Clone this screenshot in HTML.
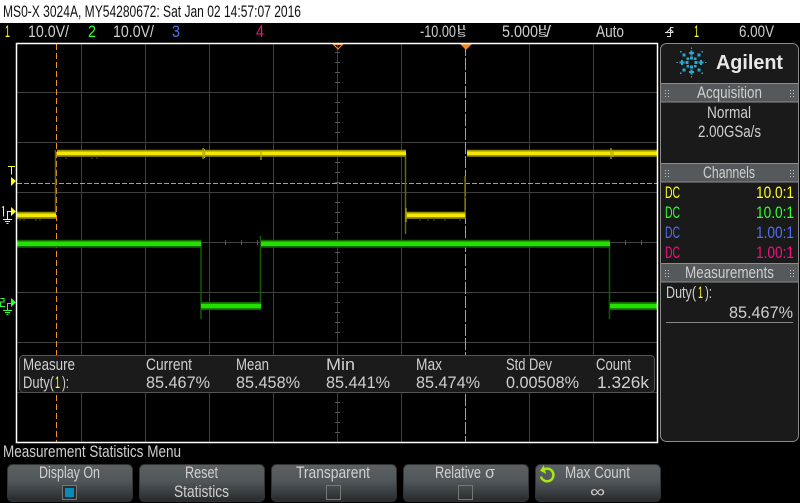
<!DOCTYPE html>
<html><head><meta charset="utf-8"><style>
html,body{margin:0;padding:0;background:#000;width:800px;height:503px;overflow:hidden}
svg{display:block}
text{font-family:"Liberation Sans",sans-serif;font-size:16.500px;fill:#cfcfcf}
.h{fill:#111}
</style></head><body>
<svg width="800" height="503" viewBox="0 0 800 503" xmlns="http://www.w3.org/2000/svg">
<defs>
<linearGradient id="b" x1="0" y1="0" x2="0" y2="1"><stop offset="0" stop-color="#5c6163"/><stop offset=".45" stop-color="#50565a"/><stop offset="1" stop-color="#262a2d"/></linearGradient>
</defs>
<rect width="800" height="503" fill="#000"/>
<rect width="800" height="23" fill="#fff"/>
<text class="h" x="3" y="17" textLength="298" lengthAdjust="spacingAndGlyphs">MS0-X 3024A, MY54280672: Sat Jan 02 14:57:07 2016</text>

<g>
<text x="5" y="37" textLength="5" lengthAdjust="spacingAndGlyphs" style="fill:#ffff20">1</text>
<text x="28" y="37" textLength="41" lengthAdjust="spacingAndGlyphs">10.0V/</text>
<text x="88" y="37" textLength="8" lengthAdjust="spacingAndGlyphs" style="fill:#30ff30">2</text>
<text x="113" y="37" textLength="41" lengthAdjust="spacingAndGlyphs">10.0V/</text>
<text x="172" y="37" textLength="8" lengthAdjust="spacingAndGlyphs" style="fill:#5070f0">3</text>
<text x="256" y="37" textLength="8" lengthAdjust="spacingAndGlyphs" style="fill:#f01080">4</text>
<text x="420" y="37" textLength="36" lengthAdjust="spacingAndGlyphs">-10.00</text>
<text x="457" y="30" textLength="9" lengthAdjust="spacingAndGlyphs" style="font-size:9px">µ</text>
<text x="457" y="37" textLength="9" lengthAdjust="spacingAndGlyphs" style="font-size:9px">s</text>
<text x="502" y="37" textLength="36" lengthAdjust="spacingAndGlyphs">5.000</text>
<text x="538" y="30" textLength="9" lengthAdjust="spacingAndGlyphs" style="font-size:9px">µ</text>
<text x="538" y="37" textLength="9" lengthAdjust="spacingAndGlyphs" style="font-size:9px">s</text>
<text x="546" y="37" textLength="5" lengthAdjust="spacingAndGlyphs">/</text>
<text x="596" y="37" textLength="28" lengthAdjust="spacingAndGlyphs">Auto</text>
<path d="M665 32.500h8M667 36.500h3.500V27.500h3M666.500 32.500l3.500-3.500 3.500 3.500" fill="none" stroke="#ddd" stroke-width="1"/>
<text x="694" y="37" textLength="5" lengthAdjust="spacingAndGlyphs" style="fill:#ffff20">1</text>
<text x="739" y="37" textLength="35" lengthAdjust="spacingAndGlyphs">6.00V</text>
</g>

<!-- grid -->
<path d="M81.500 44V442M145.500 44V442M209.500 44V442M273.500 44V442M337.500 44V442M401.500 44V442M529.500 44V442M593.500 44V442M17 92.500H657M17 142.500H657M17 192.500H657M17 242.500H657M17 292.500H657M17 342.500H657M17 392.500H657" stroke="#3f3f3f" stroke-width="1" fill="none"/>
<path d="M335 52.500h5M335 62.500h5M335 72.500h5M335 82.500h5M335 102.500h5M335 112.500h5M335 122.500h5M335 132.500h5M335 152.500h5M335 162.500h5M335 172.500h5M335 182.500h5M335 202.500h5M335 212.500h5M335 222.500h5M335 232.500h5M335 252.500h5M335 262.500h5M335 272.500h5M335 282.500h5M335 302.500h5M335 312.500h5M335 322.500h5M335 332.500h5M335 402.500h5M335 412.500h5M335 422.500h5M335 432.500h5M225.500 240v5M241.500 240v5M257.500 240v5M289.500 240v5M305.500 240v5M321.500 240v5M353.500 240v5M369.500 240v5M385.500 240v5M417.500 240v5M433.500 240v5M449.500 240v5M481.500 240v5M497.500 240v5M513.500 240v5M545.500 240v5M561.500 240v5M577.500 240v5M609.500 240v5M625.500 240v5M641.500 240v5" stroke="#555" stroke-width="1" fill="none"/>

<!-- trigger level & cursors -->
<path d="M17 183.500H657" stroke="#f09020" stroke-width="1" stroke-dasharray="5 2" fill="none"/>
<path d="M56.500 44V442" stroke="#f09020" stroke-width="1" stroke-dasharray="6 3" fill="none"/>
<path d="M465.500 44V442" stroke="#f09020" stroke-width="1" stroke-dasharray="12 2" fill="none"/>
<path d="M333.500 44.500h9l-4.500 4.500z" fill="none" stroke="#f08a20" stroke-width="1.200"/>
<path d="M460 44h12l-6 6z" fill="#f08a20"/>

<!-- yellow trace -->
<g fill="none">
<path d="M55.500 150V214M405.500 153V234M465 176V218" stroke="#6a6600" stroke-width="1.500"/>
<path d="M17 215.300H56M406 215.300H465M57 153.300H406M467 153.300H657" stroke="#9a9200" stroke-width="7"/>
<path d="M17 215.300H56M407 215.300H465M57 153.300H406M467 153.300H657" stroke="#f2e800" stroke-width="3.500"/>
<path d="M203 148V159M204.500 149V158M261 152V160M611 148V159M613 150V157M406 208V222" stroke="#b5ad00" stroke-width="1.200"/>
<path d="M20 218v3M24 218v3M36 218v3M40 218v3M66 156v3M92 156v3M97 156v3M420 218v3M428 218v3M434 218v3M445 218v3M460 218v3" stroke="#5a5500" stroke-width="1"/>
</g>

<!-- green trace -->
<g fill="none">
<path d="M201 243V319M260.500 236V306M609.500 243V319" stroke="#115c00" stroke-width="1.500"/>
<path d="M17 243.700H201M261 243.700H610M201 306H261M610 306H657" stroke="#126a00" stroke-width="8"/>
<path d="M17 243.700H201M261 243.700H610M201 306H261M610 306H657" stroke="#22e000" stroke-width="4.500"/>
</g>

<!-- graticule border -->
<path d="M16.500 43.500H657.500V442.500H16.500Z" fill="none" stroke="#fff" stroke-width="1.500"/>

<!-- left markers -->
<g fill="none" stroke="#ffff20" stroke-width="1">
<path d="M8 166.500h7M11.500 166.500v8"/>
<path d="M2 207.500l1.500-1v10"/>
<path d="M11 211.500H7.500V219M3 219.500h9M5 221.500h5M6.500 223.500h2"/>
</g>
<path d="M11 177l5 4-5 5zM11 207l5 4.500-5 4.500z" fill="#ffff20"/>
<g fill="none" stroke="#30ff30" stroke-width="1">
<path d="M0.500 298.500h3.500v3.500h-3.500v4.500h4.500"/>
<path d="M11 303.500H7.500V310M3 310.500h9M5 312.500h5M6.500 314.500h2"/>
</g>
<path d="M11 298l5 4.500-5 4.500z" fill="#30ff30"/>

<!-- measurement box -->
<rect x="19.500" y="355.500" width="635" height="37" rx="4" fill="#1b1b1b" stroke="#555"/>
<g>
<text x="23" y="370" textLength="52" lengthAdjust="spacingAndGlyphs">Measure</text>
<text x="23" y="388" textLength="31" lengthAdjust="spacingAndGlyphs">Duty(</text>
<text x="55" y="388" textLength="5" lengthAdjust="spacingAndGlyphs" style="fill:#ffff20">1</text>
<text x="62" y="388" textLength="7" lengthAdjust="spacingAndGlyphs">):</text>
<text x="146" y="370" textLength="46" lengthAdjust="spacingAndGlyphs">Current</text>
<text x="236" y="370" textLength="33" lengthAdjust="spacingAndGlyphs">Mean</text>
<text x="326" y="370" textLength="29" lengthAdjust="spacingAndGlyphs">Min</text>
<text x="416" y="370" textLength="26" lengthAdjust="spacingAndGlyphs">Max</text>
<text x="506" y="370" textLength="46" lengthAdjust="spacingAndGlyphs">Std Dev</text>
<text x="596" y="370" textLength="35" lengthAdjust="spacingAndGlyphs">Count</text>
<text x="146" y="388" textLength="64" lengthAdjust="spacingAndGlyphs">85.467%</text>
<text x="236" y="388" textLength="64" lengthAdjust="spacingAndGlyphs">85.458%</text>
<text x="326" y="388" textLength="64" lengthAdjust="spacingAndGlyphs">85.441%</text>
<text x="416" y="388" textLength="64" lengthAdjust="spacingAndGlyphs">85.474%</text>
<text x="506" y="388" textLength="73" lengthAdjust="spacingAndGlyphs">0.00508%</text>
<text x="597" y="388" textLength="52" lengthAdjust="spacingAndGlyphs">1.326k</text>
</g>

<!-- right panel -->
<rect x="660.500" y="43.500" width="138" height="398" rx="6" fill="#1a1a1a" stroke="#8a8a8a"/>
<g fill="#2aa8d0" transform="translate(691.500 62.500)">
<path d="M-.5-15h1v1.500h-1zM-.5 13.500h1v1.500h-1zM-15-.5h1.500v1h-1.500zM13.500-.5h1.500v1h-1.500z"/>
<path d="M-1-12h2v5h-2zM-2.500-10.500h5v2h-5zM-1 7h2v5h-2zM-2.500 8.500h5v2h-5zM-12-1h5v2h-5zM-10.500-2.500h2v5h-2zM7-1h5v2h-5zM8.500-2.500h2v5h-2z"/>
<path d="M-1.500-6h3v3h-3zM-1.500 3h3v3h-3zM-6-1.500h3v3h-3zM3-1.500h3v3h-3z"/>
<path d="M-9-9h3v3h-3zM6-9h3v3h-3zM-9 6h3v3h-3zM6 6h3v3h-3z"/>
<path d="M-5-5h2.500v2.500h-2.500zM2.500-5h2.500v2.500h-2.500zM-5 2.500h2.500v2.500h-2.500zM2.500 2.500h2.500v2.500h-2.500z"/>
<path d="M-11.500-11.500h1.500v1.500h-1.500zM10-11.500h1.500v1.500h-1.500zM-11.500 10h1.500v1.500h-1.500zM10 10h1.500v1.500h-1.500z"/>
</g>
<text x="716" y="69" textLength="67" lengthAdjust="spacingAndGlyphs" style="font-size:20px;font-weight:bold;fill:#e8e8e8">Agilent</text>

<g>
<rect x="661" y="83" width="137" height="19" fill="#55595b"/><path d="M661 83.500H798M661 102H798" stroke="#8a8c8d"/>
<rect x="661" y="163" width="137" height="19" fill="#55595b"/><path d="M661 163.500H798M661 182H798" stroke="#8a8c8d"/>
<rect x="661" y="263" width="137" height="19" fill="#55595b"/><path d="M661 263.500H798M661 282H798" stroke="#8a8c8d"/>
<path d="M665 90h1v1h-1zM668 90h1v1h-1zM665 93h1v1h-1zM668 93h1v1h-1zM665 96h1v1h-1zM668 96h1v1h-1zM790 90h1v1h-1zM793 90h1v1h-1zM790 93h1v1h-1zM793 93h1v1h-1zM790 96h1v1h-1zM793 96h1v1h-1zM665 170h1v1h-1zM668 170h1v1h-1zM665 173h1v1h-1zM668 173h1v1h-1zM665 176h1v1h-1zM668 176h1v1h-1zM790 170h1v1h-1zM793 170h1v1h-1zM790 173h1v1h-1zM793 173h1v1h-1zM790 176h1v1h-1zM793 176h1v1h-1zM665 270h1v1h-1zM668 270h1v1h-1zM665 273h1v1h-1zM668 273h1v1h-1zM665 276h1v1h-1zM668 276h1v1h-1zM790 270h1v1h-1zM793 270h1v1h-1zM790 273h1v1h-1zM793 273h1v1h-1zM790 276h1v1h-1zM793 276h1v1h-1z" fill="#c8c8c8"/>
<text x="697" y="98" textLength="65" lengthAdjust="spacingAndGlyphs">Acquisition</text>
<text x="707" y="118" textLength="44" lengthAdjust="spacingAndGlyphs">Normal</text>
<text x="698" y="137" textLength="63" lengthAdjust="spacingAndGlyphs">2.00GSa/s</text>
<text x="703" y="178" textLength="52" lengthAdjust="spacingAndGlyphs">Channels</text>
<text x="665" y="198" textLength="15" lengthAdjust="spacingAndGlyphs" style="fill:#ffff20">DC</text>
<text x="756" y="198" textLength="38" lengthAdjust="spacingAndGlyphs" style="fill:#ffff20">10.0:1</text>
<text x="665" y="218" textLength="15" lengthAdjust="spacingAndGlyphs" style="fill:#30ff30">DC</text>
<text x="756" y="218" textLength="38" lengthAdjust="spacingAndGlyphs" style="fill:#30ff30">10.0:1</text>
<text x="665" y="238" textLength="15" lengthAdjust="spacingAndGlyphs" style="fill:#5070f0">DC</text>
<text x="756" y="238" textLength="38" lengthAdjust="spacingAndGlyphs" style="fill:#5070f0">1.00:1</text>
<text x="665" y="258" textLength="15" lengthAdjust="spacingAndGlyphs" style="fill:#f01080">DC</text>
<text x="756" y="258" textLength="38" lengthAdjust="spacingAndGlyphs" style="fill:#f01080">1.00:1</text>
<text x="685" y="278" textLength="89" lengthAdjust="spacingAndGlyphs">Measurements</text>
<text x="666" y="298" textLength="30" lengthAdjust="spacingAndGlyphs">Duty(</text>
<text x="698" y="298" textLength="5" lengthAdjust="spacingAndGlyphs" style="fill:#ffff20">1</text>
<text x="705" y="298" textLength="7" lengthAdjust="spacingAndGlyphs">):</text>
<text x="729" y="318" textLength="64" lengthAdjust="spacingAndGlyphs">85.467%</text>
<path d="M666 322.500H793" stroke="#888"/>
</g>

<!-- bottom -->
<text x="3" y="457" textLength="178" lengthAdjust="spacingAndGlyphs">Measurement Statistics Menu</text>
<g stroke="#333" stroke-width="1">
<rect x="7.500" y="464.500" width="125" height="37" rx="5" fill="url(#b)"/>
<rect x="139.500" y="464.500" width="125" height="37" rx="5" fill="url(#b)"/>
<rect x="271.500" y="464.500" width="125" height="37" rx="5" fill="url(#b)"/>
<rect x="403.500" y="464.500" width="125" height="37" rx="5" fill="url(#b)"/>
<rect x="535.500" y="464.500" width="125" height="37" rx="5" fill="url(#b)"/>
</g>
<text x="39" y="478" textLength="61" lengthAdjust="spacingAndGlyphs">Display On</text>
<rect x="62.500" y="485.500" width="14" height="14" fill="#2a2e30" stroke="#777"/>
<rect x="65" y="488" width="9" height="9" fill="#0a8ab8"/>
<text x="185" y="478" textLength="33" lengthAdjust="spacingAndGlyphs">Reset</text>
<text x="174" y="497" textLength="55" lengthAdjust="spacingAndGlyphs">Statistics</text>
<text x="296" y="478" textLength="74" lengthAdjust="spacingAndGlyphs">Transparent</text>
<rect x="326.500" y="485.500" width="14" height="14" fill="none" stroke="#777"/>
<text x="435" y="478" textLength="46" lengthAdjust="spacingAndGlyphs">Relative</text>
<text x="485" y="478" textLength="10" lengthAdjust="spacingAndGlyphs">σ</text>
<rect x="458.500" y="485.500" width="14" height="14" fill="none" stroke="#777"/>
<path d="M544 469.500a6.300 6.300 0 1 1-3 7" fill="none" stroke="#a6e810" stroke-width="2.500"/>
<path d="M540 470l5-4.500 0 9z" fill="#a6e810" transform="rotate(-15 543 470)"/>
<text x="565" y="478" textLength="65" lengthAdjust="spacingAndGlyphs">Max Count</text>
<text x="590" y="497" textLength="15" lengthAdjust="spacingAndGlyphs">∞</text>
</svg>
</body></html>
